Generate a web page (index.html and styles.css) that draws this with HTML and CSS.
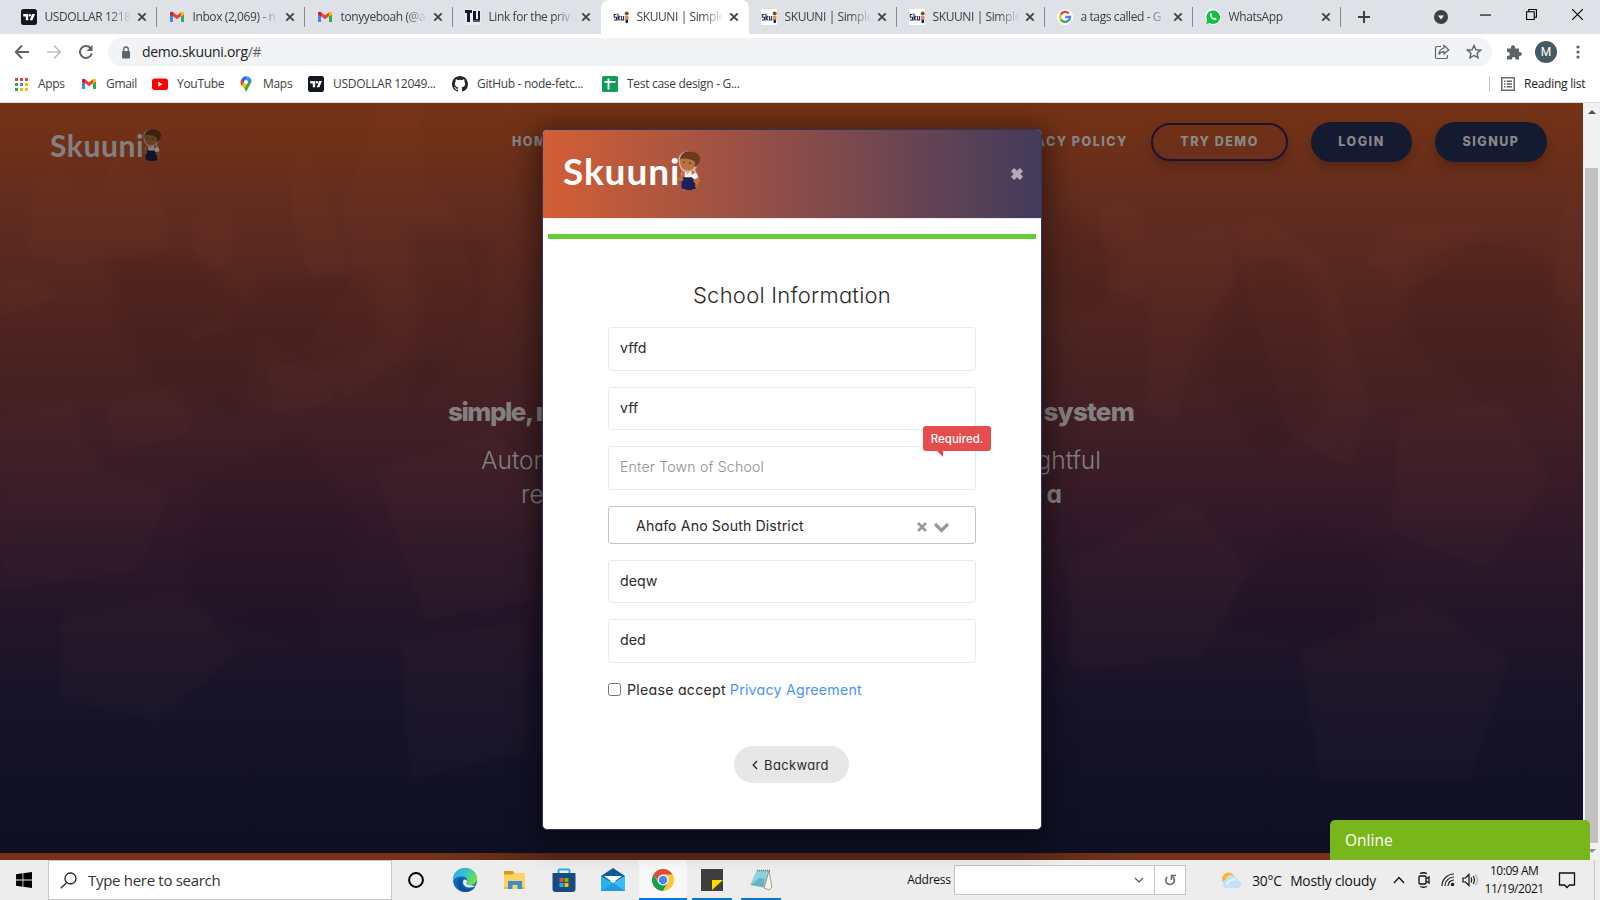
FILE: index.html
```html
<!DOCTYPE html>
<html lang="en">
<head>
<meta charset="utf-8">
<title>SKUUNI | Simple</title>
<link rel="stylesheet" href="styles.css">
</head>
<body>
<svg class="defs" width="0" height="0">
  <symbol id="x" viewBox="0 0 10 10"><path d="M1.3 1.3l7.4 7.4M8.7 1.3L1.3 8.7" stroke="#3c4043" stroke-width="1.8"/></symbol>
  <symbol id="tv" viewBox="0 0 16 16"><rect width="16" height="16" rx="2.5" fill="#131722"/><path d="M2.2 5h5v6.3H4.8V7.4H2.2z" fill="#fff"/><circle cx="8.9" cy="6.2" r="1.2" fill="#fff"/><path d="M11.2 5h2.8l-2.6 6.3H8.7z" fill="#fff"/></symbol>
  <symbol id="gmail" viewBox="0 0 16 16"><path d="M1 4v9h3V7z" fill="#4285f4"/><path d="M15 4v9h-3V7z" fill="#34a853"/><path d="M1 4.2C1 2.700 2.700 2.300 4 3.200v4.300L1 5.500z" fill="#c5221f"/><path d="M4 3.200l4 3 4-3v4.100l-4 3-4-3z" fill="#ea4335"/><path d="M15 4.200C15 2.700 13.300 2.300 12 3.200v4.300l3-2z" fill="#fbbc04"/></symbol>
  <symbol id="sk" viewBox="0 0 16 16"><rect width="16" height="16" fill="#fff"/><path d="M3.500 5.500H1.300v2.700h2.200V11H.8M5 4.500V11.500M7.200 7L5.300 9l2 2.500M8.600 7v4h2V7" fill="none" stroke="#272a50" stroke-width="1.100"/><circle cx="13.700" cy="4.500" r="2" fill="#8a4b22"/><path d="M12 7h3.500v3.500H12z" fill="#e58a4d"/><path d="M12.300 10.500h2.700V14h-2.300z" fill="#20265e"/></symbol>
  <symbol id="boy" viewBox="0 0 24 42"><path d="M2 12C0 5 6 1 12 1s11 3 11 9c0 5-3 8-4 10l4 9-2 5-3 7H6L4 30l2-8C3 19 2 15 2 12z" fill="#eee" opacity=".6"/><path d="M3 11C3 4 8 1 13 1c6 0 11 3 11 8 0 4-2 6-4 8L5 14z" fill="#6b3c1c"/><path d="M3 9c4-1 10-1 16 3 0 6-3 9-8 9S3 17 3 9z" fill="#b87440"/><circle cx="7.500" cy="12.500" r="1" fill="#442"/><circle cx="13.500" cy="13.500" r="1" fill="#442"/><path d="M4 24l4-3 3 4 4-4 5 4-1 8H5z" fill="#f4eee8"/><path d="M5 23l3-2v8H4zM15 21l3 1v8h-2z" fill="#d85d2c"/><path d="M4 28h15l1 12c-5 2-10 2-15 0z" fill="#1c2258"/><circle cx="4" cy="30" r="2.600" fill="#b87440"/><circle cx="20.500" cy="31.500" r="3.300" fill="#b87440"/><circle cx="18.500" cy="27" r="2.900" fill="#fff"/><path d="M19 35h3v4h-3z" fill="#d85d2c"/></symbol>
</svg>

<header class="tabs">
  <div class="tab"><svg class="fav"><use href="#tv"/></svg><span class="tt">USDOLLAR 1218</span><svg class="tx"><use href="#x"/></svg></div>
  <div class="tab"><svg class="fav"><use href="#gmail"/></svg><span class="tt">Inbox (2,069) - n</span><svg class="tx"><use href="#x"/></svg></div>
  <div class="tab"><svg class="fav"><use href="#gmail"/></svg><span class="tt">tonyyeboah (@a</span><svg class="tx"><use href="#x"/></svg></div>
  <div class="tab nosep"><svg class="fav" viewBox="0 0 16 16"><rect width="16" height="16" fill="#e8edf3"/><path d="M0 1h7v3H5v9H2V4H0zM8 2h3v8h2V2h2v11H8z" fill="#141a2c"/><path d="M8 11h7v2H8z" fill="#4d5a72"/></svg><span class="tt">Link for the priv</span><svg class="tx"><use href="#x"/></svg></div>
  <div class="tab active"><svg class="fav"><use href="#sk"/></svg><span class="tt">SKUUNI | Simple</span><svg class="tx"><use href="#x"/></svg></div>
  <div class="tab"><svg class="fav"><use href="#sk"/></svg><span class="tt">SKUUNI | Simple</span><svg class="tx"><use href="#x"/></svg></div>
  <div class="tab"><svg class="fav"><use href="#sk"/></svg><span class="tt">SKUUNI | Simple</span><svg class="tx"><use href="#x"/></svg></div>
  <div class="tab"><svg class="fav" viewBox="0 0 16 16"><circle cx="8" cy="8" r="8" fill="#fff"/><g fill="none" stroke-width="2.300"><path d="M11.800 4.500A5 5 0 0 0 3.700 5.600" stroke="#ea4335"/><path d="M3.700 5.600a5 5 0 0 0 0 4.800" stroke="#fbbc05"/><path d="M3.700 10.400a5 5 0 0 0 7.600 1.300" stroke="#34a853"/><path d="M11.300 11.700A5 5 0 0 0 13 8H8.200" stroke="#4285f4"/></g></svg><span class="tt">a tags called - G</span><svg class="tx"><use href="#x"/></svg></div>
  <div class="tab"><svg class="fav" viewBox="0 0 16 16"><circle cx="8" cy="8" r="8" fill="#fff"/><path d="M1.200 15l1-3.700A6.800 6.800 0 1 1 4.800 14z" fill="#12c143"/><path d="M5.200 4.500c-1 1-.3 3 1.300 4.700s3.700 2.500 4.700 1.400c.5-.5.500-.9.200-1.200L9.900 8.600l-.9.900C7.900 9 7.100 8.200 6.500 7.100l.8-.8-.8-1.800c-.3-.4-.8-.5-1.300 0z" fill="#fff"/></svg><span class="tt">WhatsApp</span><svg class="tx"><use href="#x"/></svg></div>
  <svg class="plus" viewBox="0 0 14 14"><path d="M7 1v12M1 7h12" stroke="#3c4043" stroke-width="2"/></svg>
  <div class="winbtns">
    <svg width="14" height="14" viewBox="0 0 14 14"><circle cx="7" cy="7" r="7" fill="#3c4043"/><path d="M4 5.500h6L7 9.500z" fill="#fff"/></svg>
    <svg class="wb" viewBox="0 0 10 10"><path d="M0 5.500h10" stroke="#000"/></svg>
    <svg class="wb" viewBox="0 0 10 10"><path d="M.5 2.500h7v7h-7zM2.500 2.500v-2h7v7h-2" fill="none" stroke="#000"/></svg>
    <svg class="wb" viewBox="0 0 10 10"><path d="M0 0l10 10M10 0L0 10" stroke="#000"/></svg>
  </div>
</header>

<div class="toolbar">
  <svg class="ti" viewBox="0 0 16 16"><path d="M15 8H2M8 1.500L1.800 8 8 14.500" fill="none" stroke="#5f6368" stroke-width="1.900"/></svg>
  <svg class="ti" viewBox="0 0 16 16"><path d="M1 8h13M8 1.500L14.200 8 8 14.500" fill="none" stroke="#bdc1c6" stroke-width="1.700"/></svg>
  <svg class="ti" viewBox="0 0 16 16"><path d="M13.800 9.500A6 6 0 1 1 12.500 4" fill="none" stroke="#5f6368" stroke-width="2"/><path d="M14.500 1v6h-6z" fill="#5f6368"/></svg>
  <div class="omni">
    <svg width="10" height="13" viewBox="0 0 10 13"><rect x="1" y="5" width="8" height="7.500" rx="1" fill="#5f6368"/><path d="M2.700 5.500V3.300a2.300 2.300 0 0 1 4.600 0v2.200" fill="none" stroke="#5f6368" stroke-width="1.300"/></svg>
    <span class="url">demo.skuuni.org<span class="dim">/#</span></span>
    <svg class="share" viewBox="0 0 16 16" fill="none" stroke="#5f6368" stroke-width="1.200"><path d="M7 2.500H3a1.500 1.500 0 0 0-1.500 1.500v9A1.500 1.500 0 0 0 3 14.500h9a1.500 1.500 0 0 0 1.500-1.500v-2"/><path d="M10 4V1.500L14.800 6 10 10V7.700C7.500 7.700 6 8.500 4.800 10.500 5.200 7 7 4.500 10 4z"/></svg>
    <svg class="star" viewBox="0 0 16 16"><path d="M8 1.500l1.900 4.300 4.700.4-3.600 3.100 1.100 4.600L8 11.500l-4.100 2.400L5 9.300 1.400 6.200l4.700-.4z" fill="none" stroke="#5f6368" stroke-width="1.400"/></svg>
  </div>
  <svg class="puz" viewBox="0 0 16 16"><path d="M1 4.500h4V3.200a2 2 0 0 1 4 0v1.300h4V8h.8a2 2 0 0 1 0 4H13v3.500H9.500v-.8a1.800 1.800 0 0 0-3.600 0v.8H1V12h.8a2 2 0 0 0 0-4H1z" fill="#5f6368"/></svg>
  <span class="avatar">M</span>
  <svg class="dots" viewBox="0 0 4 14"><circle cx="2" cy="2" r="1.600"/><circle cx="2" cy="7" r="1.600"/><circle cx="2" cy="12" r="1.600"/></svg>
</div>

<div class="marks">
  <div class="bm"><svg viewBox="0 0 16 16"><path d="M2 2h3v3H2zM7 2h3v3H7zM12 2h3v3h-3z" fill="#ea4335"/><path d="M2 7h3v3H2z" fill="#34a853"/><path d="M7 7h3v3H7z" fill="#4285f4"/><path d="M12 7h3v3h-3z" fill="#fbbc04"/><path d="M2 12h3v3H2z" fill="#34a853"/><path d="M7 12h3v3H7zM12 12h3v3h-3z" fill="#fbbc04"/></svg>Apps</div>
  <div class="bm"><svg><use href="#gmail"/></svg>Gmail</div>
  <div class="bm"><svg viewBox="0 0 16 16"><rect y="2.500" width="16" height="11.500" rx="2.500" fill="#f00"/><path d="M6.300 5.700v5l4.200-2.500z" fill="#fff"/></svg>YouTube</div>
  <div class="bm"><svg viewBox="0 0 16 16"><path d="M2.500 6A5.500 5.500 0 0 1 4 2.200L8 6l-4 4.500C3 9 2.500 7.500 2.500 6z" fill="#ea4335"/><path d="M4 2.200A5.500 5.500 0 0 1 10 .8L5 7z" fill="#1a73e8"/><path d="M10 .8A5.500 5.500 0 0 1 13.500 6L8 16l-1.500-3.500z" fill="#34a853"/><path d="M3.500 9.500L6.500 6l3 2-3 4.500z" fill="#fbbc04"/><path d="M10 .8a5.500 5.500 0 0 1 3 3L9.500 8 7 4.500z" fill="#4285f4"/><circle cx="8" cy="6" r="2" fill="#fff"/></svg>Maps</div>
  <div class="bm"><svg><use href="#tv"/></svg>USDOLLAR 12049...</div>
  <div class="bm"><svg viewBox="0 0 16 16"><path fill="#24292e" d="M8 0C3.580 0 0 3.580 0 8c0 3.540 2.290 6.530 5.470 7.590.4.070.55-.17.55-.38 0-.19-.01-.82-.01-1.490-2.010.37-2.530-.49-2.690-.94-.09-.23-.48-.94-.82-1.130-.28-.15-.68-.52-.01-.53.63-.01 1.080.58 1.230.82.720 1.210 1.870.87 2.330.66.070-.52.28-.87.510-1.070-1.780-.2-3.640-.89-3.640-3.950 0-.87.310-1.590.82-2.150-.08-.2-.36-1.020.08-2.120 0 0 .67-.21 2.200.82a7.600 7.600 0 0 1 4 0c1.530-1.040 2.200-.82 2.200-.82.440 1.100.16 1.920.08 2.120.51.560.82 1.270.82 2.150 0 3.070-1.870 3.750-3.650 3.950.29.250.54.730.54 1.480 0 1.070-.01 1.930-.01 2.200 0 .21.150.46.550.38A8 8 0 0 0 16 8c0-4.420-3.580-8-8-8z"/></svg>GitHub - node-fetc...</div>
  <div class="bm"><svg viewBox="0 0 16 16"><rect width="16" height="16" rx="1.500" fill="#119d58"/><path d="M2.500 5.800h11M6.500 2.500v11" stroke="#fff" stroke-width="1.800"/></svg>Test case design - G...</div>
  <div class="reading"><svg viewBox="0 0 14 14"><rect x=".8" y=".8" width="12.400" height="12.400" fill="none" stroke="#5f6368" stroke-width="1.400"/><path d="M3 4.200h1.500M3 7h1.500M3 9.800h1.500M5.700 4.200H11M5.700 7H11M5.700 9.800H11" stroke="#5f6368" stroke-width="1.400"/></svg>Reading list</div>
</div>

<main class="view">
  <div class="site">
    <svg class="photo" viewBox="0 103 1583 750" preserveAspectRatio="none">
      <g fill="#ff9a70">
        <path d="M35 175l25-5 30 30 25-40 30 10 25 55-10 30-95 10-38-10z"/><path d="M100 232l50-8-8 30-15 8-20-5z"/><path d="M0 272l40 10 20 15-60 20z"/><path d="M190 220l30-15 20 30-25 40-20-20z"/>
        <path d="M290 160l20-15 25 70 15 60-40 5-18-60z"/><path d="M340 210l20-50 20-50 40 0 5 80 30 20 20 70-25 80-90 0-5-90z"/><path d="M385 230l50 20-10 90-80 60-40-50 40-60z"/><path d="M190 330l40-20 5 15-45 18z"/><path d="M268 363l60 10 5 30-60 10z"/><path d="M105 400l75-15 10 50-75 15z"/><path d="M0 420l70-20 30 70 70 20-30 80-140 20z"/><path d="M60 620l120-30 60 60-80 70-100-20z"/><path d="M375 470l120-40 40 50v120l-110 20z"/><path d="M400 640l130-20v130l-120 30z"/>
        <path d="M1100 205l30-5 25 40-8 60-40-10z"/><path d="M1230 222l40-5 60 50 40 140-20 60-60-30-40-140z"/><path d="M1155 240l70-20 10 60-40 60-20 90-30-20z"/><path d="M1395 220l90 0-25 40-55 30-40-30z"/><path d="M1560 220l23-40v130l-30-20z"/><path d="M1070 560l120-60 60 70-50 90-130 10z"/><path d="M1400 420l100-20 50 80-60 90-100-40z"/><path d="M1300 650l120-50 90 60-40 120h-150z"/>
      </g>
      <g fill="#120410">
        <path d="M110 250l90 10 60 60-20 100-80-30-40-60z"/><path d="M265 275h100l20 60-60 30-90-30z"/><path d="M410 230l80 10-10 60-40 80-30 20 10-100z"/><path d="M1060 210l60 40-20 60-60-10z"/><path d="M1240 265q60-20 80 30l5 120-60 40-60-80z"/><path d="M1410 270q70-60 145 0v140l-80-20-70-50z"/><path d="M200 480l100-40 60 80-50 120-120-40z"/><path d="M1230 620l60-100 90 30-20 100z"/>
      </g>
    </svg>
    <nav class="nav">
      <div class="brand small"><span>Skuuni</span><svg><use href="#boy"/></svg></div>
      <div class="links"><span class="nl">HOME</span><span class="nl">PRIVACY POLICY</span></div>
      <span class="pill line">TRY DEMO</span><span class="pill login">LOGIN</span><span class="pill signup">SIGNUP</span>
    </nav>
    <div class="hero">
      <div class="h1"><span>simple, r</span><span>system</span></div>
      <div class="h2 l2"><span>Autom</span><span>insightful</span></div>
      <div class="h2 l3"><span>re</span><b>a</b></div>
    </div>
    <div class="next"></div>
    <section class="modal">
      <div class="mhead"><div class="brand"><span>Skuuni</span><svg><use href="#boy"/></svg></div>
        <svg class="mclose" viewBox="0 0 12 12"><path d="M2.200 2.200l7.600 7.600M9.800 2.200L2.200 9.800" stroke="#b3acb7" stroke-width="4"/></svg></div>
      <div class="bar"></div>
      <h2 class="title">School Information</h2>
      <form class="form">
        <div class="in a">vffd</div>
        <div class="in b">vff</div>
        <div class="in a ph">Enter Town of School<span class="err">Required.<svg viewBox="0 0 6 6"><path d="M0 0h6v6z" fill="#e54d4d"/></svg></span></div>
        <div class="sel"><span>Ahafo Ano South District</span><svg viewBox="0 0 32 12" fill="none" stroke="#999" stroke-width="2.600"><path d="M1.500 2l8 8M9.500 2l-8 8"/><path d="M18.500 3l6.500 6.500L31.500 3" stroke-width="3.200"/></svg></div>
        <div class="in b">deqw</div>
        <div class="in a">ded</div>
        <div class="agree"><input type="checkbox" class="cb"><span>Please accept</span><a class="pa">Privacy Agreement</a></div>
      </form>
      <div class="back"><svg viewBox="0 0 6 10"><path d="M5 1L1.200 5 5 9" fill="none" stroke="#222" stroke-width="1.300"/></svg>Backward</div>
    </section>
    <div class="chat">Online</div>
  </div>
  <div class="scroll"><i class="up"></i><div class="thumb"></div><i class="down"></i></div>
</main>

<footer class="task">
  <svg class="start" viewBox="0 0 16 16"><path d="M0 2.200L6.500 1.300V7.600H0zM7.300 1.200L16 0v7.600H7.300zM0 8.400h6.500v6.300L0 13.800zM7.300 8.400H16V16l-8.700-1.200z"/></svg>
  <div class="find"><svg viewBox="0 0 17 17"><circle cx="10.500" cy="6.500" r="5.500" fill="none" stroke="#222" stroke-width="1.300"/><path d="M6.600 10.600L.8 16.300" stroke="#222" stroke-width="1.300"/></svg>Type here to search</div>
  <div class="apps">
    <div class="app"><svg viewBox="0 0 24 24"><circle cx="12" cy="12" r="6.900" fill="none" stroke="#000" stroke-width="2"/></svg></div>
    <div class="app"><svg viewBox="0 0 24 24"><defs><linearGradient id="eg" x1="0" y1="0" x2="1" y2=".5"><stop offset="0" stop-color="#2aa6e8"/><stop offset=".5" stop-color="#33c2d0"/><stop offset="1" stop-color="#6be04c"/></linearGradient></defs><circle cx="12" cy="12" r="12" fill="#1267b8"/><path d="M0 11C1 4 6 0 12 0c7 0 12 5 12 10.500 0 4-3 6.500-6.500 6.500-3 0-4.500-1-4-2 1.500-2 1-5.500-3-6.500C6 8 1 9 0 14z" fill="url(#eg)"/><path d="M9 12c-2 4 1 9 7 9 3 0 5-1.200 6.500-2.500C20 22.500 16 24 12 24 7 24 3 18 5 13c1-2 3-3 5-3z" fill="#0d4f9c"/><path d="M11 11.500c-2.500 3 0 8 5.500 8 2.500 0 5-.8 6.700-2 .6-.3.900 0 .7.500L23 20c2-3-4-2-6-3-3 0-4.200-1-3.500-2.200 1.200-1.500.5-3.300-2.500-3.300z" fill="#ededed"/></svg></div>
    <div class="app"><svg viewBox="0 0 24 24"><path d="M2 3h9l2 2h9a1 1 0 0 1 1 1v15H2z" fill="#fcd364"/><path d="M2 3h9l1 2-1.500 1.500H2z" fill="#dc9a0e"/><path d="M6 21v-8h14v8h-4.500v-4h-5v4z" fill="#3b8ed0"/><path d="M2 19h4v2H2zM20 19h3v2h-3z" fill="#f2bb3c"/></svg></div>
    <div class="app"><svg viewBox="0 0 24 24"><path d="M6.500 5V2.500a1 1 0 0 1 1-1h9a1 1 0 0 1 1 1V5" fill="none" stroke="#1fb4ee" stroke-width="2"/><path d="M.500 5h23v16a3 3 0 0 1-3 3h-17a3 3 0 0 1-3-3z" fill="#174a82"/><path d="M7.500 10h4v4h-4z" fill="#f25022"/><path d="M12.500 10h4v4h-4z" fill="#7fba00"/><path d="M7.500 15h4v4h-4z" fill="#25aef3"/><path d="M12.500 15h4v4h-4z" fill="#ffb900"/></svg></div>
    <div class="app"><svg viewBox="0 0 24 24"><path d="M0 8L12 0l12 8v5H0z" fill="#0f5a9f"/><path d="M0 8v15h24V8l-12 7z" fill="#28b0ec"/><path d="M3 8h18l-9 6.500z" fill="#fff"/><path d="M12 15L24 8v15z" fill="#37bdf3"/><path d="M12 15l12 8H0z" fill="#209be0"/></svg></div>
    <div class="app on"><svg viewBox="0 0 24 24"><circle cx="12" cy="12" r="11" fill="#fbc934"/><path d="M2.500 6.500A11 11 0 0 1 21.500 6.500H12L8 14z" fill="#dd4b3e"/><path d="M2.500 6.500A11 11 0 0 0 12 23l4.500-8.500L7.500 15z" fill="#1a9d55"/><circle cx="12" cy="12" r="5.400" fill="#fff"/><circle cx="12" cy="12" r="4.300" fill="#4a86ee"/></svg></div>
    <div class="app run"><svg viewBox="0 0 24 24"><path d="M1 1h22v22H1z" fill="#3e3e3e"/><path d="M12 12h11L12 22z" fill="#ffdb00"/></svg></div>
    <div class="app run"><svg viewBox="0 0 24 24"><path d="M8 2h12l-4 18L1 17z" fill="#8fd0da"/><path d="M20 3l3 16-3 3-5-2z" fill="#f4f2ea" stroke="#8a7a58" stroke-width=".7"/><path d="M8 2.500h13" stroke="#777" stroke-width="1.500" stroke-dasharray="1 1"/><path d="M2 17l8-7 6 1-2 8z" fill="#49a1b3" opacity=".6"/></svg></div>
  </div>
  <span class="addr">Address</span>
  <div class="abox"><svg class="ac" viewBox="0 0 10 6"><path d="M1 1l4 4 4-4" fill="none" stroke="#555" stroke-width="1.200"/></svg><div class="go"><svg viewBox="0 0 12 12"><path d="M8.500 2.600A4.300 4.300 0 1 1 3.200 3" fill="none" stroke="#666" stroke-width="1.600"/><path d="M7.500 6V1.500H12" fill="none" stroke="#666" stroke-width="1.500"/></svg></div></div>
  <div class="tray">
    <svg class="wx" viewBox="0 0 22 16"><circle cx="7.500" cy="7" r="6.500" fill="#fbb729"/><path d="M5 16a4.500 4.500 0 0 1-.5-8.500A6 6 0 0 1 15 5.500a4 4 0 0 1 2 3A3.800 3.800 0 0 1 17 16z" fill="#c1e3fa"/><path d="M6 13a6 6 0 0 1 8-5" stroke="#e9f7ff" stroke-width="2" fill="none"/></svg>
    <span class="deg">30°C</span><span class="mc">Mostly cloudy</span>
    <svg class="chev" viewBox="0 0 12 8"><path d="M1 7l5-5.500L11 7" fill="none" stroke="#111" stroke-width="1.300"/></svg>
    <svg class="cam" viewBox="0 0 14 16" fill="none" stroke="#111" stroke-width="1.300"><rect x="2" y="4" width="7" height="8" rx="1"/><path d="M9 7l3-2v6l-3-2M3 1.500q3.500-1.500 7 0M3 14.500q3.500 1.500 7 0"/></svg>
    <svg class="wifi" viewBox="0 0 14 14" fill="none" stroke="#222" stroke-width="1.200"><path d="M1 13A12 12 0 0 1 13 1M4 13a9 9 0 0 1 9-9M7 13a6 6 0 0 1 6-6"/><circle cx="11.500" cy="11.500" r="1.200" fill="#222"/></svg>
    <svg class="spk" viewBox="0 0 17 14" fill="none" stroke="#111" stroke-width="1.200"><path d="M1 5h2.500L7 1.500v11L3.500 9H1zM9 4.500q1.500 2.500 0 5M11.200 3q2.500 4 0 8"/><path d="M13.500 1.500q4 5.500 0 11" stroke="#aaa"/></svg>
    <div class="clock"><span class="tm">10:09 AM</span><span class="dt">11/19/2021</span></div>
    <svg class="note" viewBox="0 0 18 17"><path d="M1.500 1h15v12h-5L9 15.500 6.500 13h-5z" fill="none" stroke="#111" stroke-width="1.300"/></svg>
    <i class="peek"></i>
  </div>
</footer>
</body>
</html>
```
FILE: styles.css
```css
* { box-sizing: border-box; }
body { margin: 0; width: 1600px; height: 900px; overflow: hidden; display: flex; flex-direction: column; font-family: "Open Sans", "Noto Sans", sans-serif; font-size: 12px; color: #3c4043; background: #fff; }
svg { display: block; flex: none; }
.defs { position: absolute; }

/* browser tabs */
.tabs { height: 34px; background: #dee1e6; display: flex; align-items: center; padding-left: 8.500px; flex: none; }
.tab { width: 148px; height: 34px; display: flex; align-items: center; padding-left: 12px; background: linear-gradient(#85898e, #85898e) right 7px / 1px 20px no-repeat; }
.tab.nosep { background: none; }
.tab.active { background: #fff; border-radius: 8px 8px 0 0; }
.fav { width: 16px; height: 16px; }
.tt { width: 90px; margin: -2px 2px 0 8px; white-space: nowrap; font-size: 12px; letter-spacing: -.4px; -webkit-mask-image: linear-gradient(90deg, #000 72%, transparent 96%); }
.tx { width: 10px; height: 10px; }
.plus { width: 14px; height: 14px; margin-left: 16px; }
.winbtns { display: flex; align-items: center; margin-left: 63px; }
.wb { width: 11px; height: 11px; margin: -6px 0 0 35px; }
.winbtns .wb:nth-child(2) { margin-left: 32px; }

/* address row */
.toolbar { height: 36px; display: flex; align-items: center; padding: 0 0 0 14px; flex: none; }
.ti { width: 16px; height: 16px; margin-right: 16px; }
.omni { width: 1384px; height: 28px; margin-left: -2px; border-radius: 14px; background: #f1f3f4; display: flex; align-items: center; padding: 0 10px 0 13px; }
.url { font-size: 14px; color: #202124; margin: -2px 0 0 11px; flex: 1; letter-spacing: -.3px; }
.dim { color: #5f6368; }
.share, .star { width: 16px; height: 16px; margin-left: 16px; }
.puz { width: 16px; height: 16px; margin-left: 14px; }
.avatar { width: 22px; height: 22px; border-radius: 50%; background: #455a64; color: #fff; font: 400 12px/22px Roboto, sans-serif; text-align: center; margin: 0 19px 0 13px; }
.dots { width: 4px; height: 14px; fill: #5f6368; }

/* bookmarks */
.marks { height: 33px; flex: none; border-bottom: 1px solid #d3dae2; display: grid; grid-template-columns: 68px 71px 86px 70px 144px 150px 1fr auto; padding: 0 15px 5px 13px; align-items: center; }
.bm { display: flex; align-items: center; gap: 9px; white-space: nowrap; font-size: 12px; letter-spacing: -.3px; }
.bm svg { width: 16px; height: 16px; }
.bm, .reading { line-height: 16px; }
.reading { display: flex; align-items: center; gap: 9px; border-left: 1px solid #c4c7cb; padding-left: 11px; height: 16px; width: 96px; white-space: nowrap; font-size: 12px; letter-spacing: -.25px; color: #202124; }
.reading svg { width: 14px; height: 14px; }

/* page */
.view { height: 757px; display: flex; flex: none; }
.site { width: 1583px; position: relative; background: linear-gradient(#763315 0, #6c2f19 50px, #602b1e 110px, #552720 180px, #4a2321 250px, #411f25 320px, #351a28 400px, #251528 500px, #171329 600px, #0f0f24 750px); display: flex; flex-direction: column; font-family: Inter, "Open Sans", sans-serif; font-feature-settings: "cv11"; }
.photo { position: absolute; inset: 0; width: 1583px; height: 750px; }
.photo g { opacity: .018; filter: blur(3px); }
.photo g:last-child { opacity: .07; filter: blur(6px); }
.nav { display: flex; align-items: center; height: 40px; margin-top: 19px; padding: 0 36px 0 50px; position: relative; color: #888; }
.brand { display: flex; align-items: center; color: #fff; font-family: Lato, sans-serif; font-weight: 700; }
.brand span { font-size: 37px; line-height: 40px; letter-spacing: .9px; width: 115px; white-space: nowrap; }
.brand svg { width: 23px; height: 41px; margin-left: -1px; }
.brand.small { color: #858080; width: 462px; padding-top: 5px; }
.brand.small span { font-size: 30px; letter-spacing: .6px; width: 93px; }
.brand.small svg { width: 19px; height: 34px; filter: brightness(.55); }
.links { width: 616px; display: flex; justify-content: space-between; margin-right: 23px; }
.nl, .pill { font-size: 12.500px; font-weight: 800; letter-spacing: 1.500px; white-space: nowrap; margin-top: -1px; }
.pill { text-align: center; border-radius: 20px; height: 40px; line-height: 40px; margin-top: 0; background: #141a30; box-shadow: 0 6px 12px rgba(0,0,0,.18); }
.pill.line { width: 137px; height: 38px; line-height: 33px; border: 2px solid #1c1233; background: none; margin-right: 23px; }
.pill.login, .pill.signup { line-height: 39px; }
.login { width: 101px; margin-right: 23px; }
.signup { width: 112px; }
.hero { position: relative; color: #858080; margin-top: 232px; padding-left: 448px; width: 1134px; }
.hero div { display: flex; justify-content: space-between; white-space: nowrap; }
.h1 { font-size: 26px; font-weight: 800; line-height: 36px; letter-spacing: -1.500px; }
.h1 span:last-child { letter-spacing: -.8px; }
.h2 { font-size: 24.500px; font-weight: 300; line-height: 34px; }
.l2 { margin: 13px 33px 0 33px; }
.l3 { margin: 0 72px 0 73px; }
.h2 b { font-weight: 700; }
.next { height: 7px; margin-top: auto; background: linear-gradient(90deg, #773319 0 27%, #562615 36% 63%, #773319 72%); position: relative; }

/* dialog */
.modal { position: absolute; left: 542px; top: 26px; width: 500px; height: 701px; background: #fff; border: 1px solid #37345a; border-radius: 5px; box-shadow: 0 6px 28px 6px rgba(0,0,0,.45); color: #2b2b2b; overflow: hidden; }
.mhead { height: 89px; background: linear-gradient(90deg, #d35f35, #433b5c); border-bottom: 1px solid #e9e6ee; display: flex; justify-content: space-between; padding: 20px 17px 0 20px; }
.mhead .brand { height: 41px; }
.mclose { width: 14px; height: 14px; margin-top: 17px; }
.bar { height: 5px; margin: 15px 5px 0; background: #66cc33; }
.title { margin: 41px 0 0; text-align: center; font-size: 22px; line-height: 30px; font-weight: 300; letter-spacing: .25px; }
.form { margin: 17px 65px 0; display: flex; flex-direction: column; }
.in { position: relative; border: 1px solid #ebebeb; border-radius: 3px; padding-left: 11px; font-size: 14.200px; line-height: 40px; margin-bottom: 16px; }
.a { height: 44px; }
.b { height: 43px; }
.ph { color: #8f8f8f; font-weight: 300; letter-spacing: .16px; }
.err { position: absolute; right: -16px; top: -21px; width: 68px; height: 25px; border-radius: 3px; background: #e54d4d; color: #fff; font-size: 11.500px; font-weight: 500; line-height: 26px; text-align: center; letter-spacing: 0; }
.err svg { position: absolute; left: 14px; top: 25px; width: 6px; height: 6px; }
.sel { height: 38px; border: 1px solid #c4c4c4; border-radius: 3px; margin-bottom: 16px; padding: 0 26px 0 27px; display: flex; align-items: center; justify-content: space-between; font-size: 14.200px; letter-spacing: .1px; }
.sel svg { width: 33px; height: 12px; margin-top: 3px; }
.agree { display: flex; align-items: center; font-size: 14.200px; height: 20px; white-space: nowrap; letter-spacing: .24px; }
.cb { width: 13px; height: 13px; margin: 0 6px 0 0; }
.pa { color: #4d94f5; margin-left: 4px; }
.back { width: 115px; height: 37px; border-radius: 19px; background: #e7e7e7; margin: 47px 0 0 191px; display: flex; align-items: center; justify-content: center; gap: 6px; font-size: 13px; letter-spacing: .35px; padding-right: 2px; }
.back svg { width: 6px; height: 10px; }
.chat { position: absolute; left: 1330px; top: 717px; width: 260px; height: 40px; border-radius: 5px 5px 0 0; background: #78b61c; color: #fff; font: 15.500px/41px "Open Sans", sans-serif; padding-left: 15px; z-index: 2; }
.scroll { width: 17px; background: #f1f1f1; display: flex; flex-direction: column; align-items: center; padding: 7px 0 5px; }
.up, .down { border: 4px solid transparent; border-top: 0; border-bottom: 4px solid #505050; }
.down { border-bottom: 0; border-top: 4px solid #909090; }
.thumb { width: 13px; height: 675px; margin: 54px 0 6px; background: #c1c1c1; flex: none; }

/* taskbar */
.task { height: 40px; background: #ededed; display: flex; align-items: center; flex: none; color: #111; }
.start { width: 16px; height: 16px; margin: 0 16px; }
.find { width: 344px; height: 40px; background: #fff; border: 1px solid #c6c6c6; display: flex; align-items: center; gap: 11px; padding-left: 11px; font-size: 15px; letter-spacing: -.3px; color: #333; }
.find svg { width: 17px; height: 17px; }
.apps { display: flex; height: 40px; margin-left: -1px; }
.app { width: 49.400px; display: flex; align-items: center; justify-content: center; }
.app svg { width: 24px; height: 24px; }
.on { background: linear-gradient(#0078d7, #0078d7) bottom / 48px 2px no-repeat, linear-gradient(#f8f8f8, #f8f8f8) center / 48px 100% no-repeat; }
.run { background: linear-gradient(#0078d7, #0078d7) bottom / 40px 2px no-repeat; }
.addr { margin: -2px 0 0 121px; font-size: 12px; letter-spacing: -.25px; width: 47px; white-space: nowrap; }
.abox { width: 232px; height: 30px; border: 1px solid #c4c4c4; background: #fff; display: flex; align-items: center; justify-content: flex-end; }
.ac { width: 10px; height: 6px; margin-right: 10px; }
.go { width: 31px; height: 28px; border-left: 1px solid #c4c4c4; display: flex; align-items: center; justify-content: center; }
.go svg { width: 12px; height: 12px; }
.tray { display: flex; align-items: center; flex: 1; margin-left: 35px; white-space: nowrap; }
.wx { width: 22px; height: 16px; }
.deg { font-size: 13.800px; letter-spacing: -.2px; width: 30px; margin-left: 9px; }
.mc { font-size: 13.800px; letter-spacing: -.2px; width: 86px; margin-left: 8px; }
.chev { width: 12px; height: 8px; margin-left: 17px; }
.cam { width: 14px; height: 16px; margin-left: 12px; }
.wifi { width: 14px; height: 14px; margin-left: 10px; }
.spk { width: 17px; height: 14px; margin-left: 7px; }
.clock { width: 60px; margin-left: 5px; display: flex; flex-direction: column; align-items: center; font-size: 12px; line-height: 18px; letter-spacing: -.45px; }
.note { width: 18px; height: 17px; margin-left: 14px; }
.peek { width: 1px; height: 40px; background: #c8c8c8; margin-left: 18px; }
```
